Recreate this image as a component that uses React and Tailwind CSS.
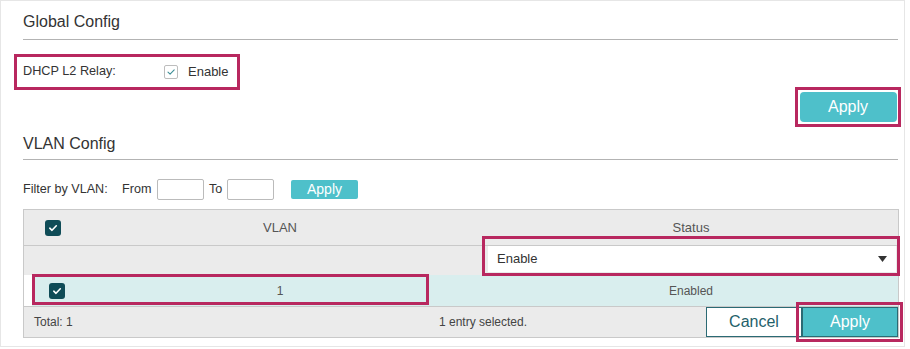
import React from "react";

const font = { fontFamily: '"Liberation Sans", Arial, sans-serif' };

function DarkCheck() {
  return (
    <span className="flex h-[16px] w-[16px] items-center justify-center rounded-[3px] bg-[#0f4c57]">
      <svg width="10" height="10" viewBox="0 0 10 10">
        <path d="M1.8 5.2 L4 7.3 L8.3 2.8" fill="none" stroke="#fff" strokeWidth="1.6" strokeLinecap="round" strokeLinejoin="round" />
      </svg>
    </span>
  );
}

export default function App() {
  return (
    <div className="h-[349px] w-[910px] bg-white text-[#333]" style={font}>
      <div className="h-[347px] w-[905px] border border-[#e6e6e6] bg-white pl-[22px] pr-[6px]">
        {/* Global Config */}
        <div className="flex h-[39px] items-center border-b border-[#b3b3b3] pt-[3px] text-[16px] text-[#333]">
          Global Config
        </div>
        <div className="mt-[14px] -ml-[9px] flex h-[36px] w-[226px] items-center border-[3px] border-[#b8285f] pl-[6px] text-[12.7px] text-[#333]">
          <span className="w-[141px]">DHCP L2 Relay:</span>
          <span className="flex h-[14px] w-[14px] items-center justify-center rounded-[2px] border border-[#bdbdbd] bg-white">
            <svg width="10" height="10" viewBox="0 0 10 10">
              <path d="M2 5.2 L4.1 7.2 L8.2 2.8" fill="none" stroke="#3f8f97" strokeWidth="1.1" strokeLinecap="round" strokeLinejoin="round" />
            </svg>
          </span>
          <span className="ml-[10px] text-[13px]">Enable</span>
        </div>
        <div className="-mt-[3px] -mr-[3px] flex justify-end">
          <div className="flex h-[40px] w-[106px] items-center justify-center border-[3px] border-[#b8285f] bg-white">
            <button className="flex h-[30px] w-[97px] items-center justify-center rounded-[4px] bg-[#4ec0ca] text-[16px] text-white">
              Apply
            </button>
          </div>
        </div>

        {/* VLAN Config */}
        <div className="flex h-[33px] items-center border-b border-[#b3b3b3] pt-[1px] text-[16px] text-[#333]">
          VLAN Config
        </div>
        <div className="mt-[19px] flex h-[21px] items-center text-[12.6px] text-[#333]">
          <span className="w-[99px] shrink-0">Filter by VLAN:</span>
          <span className="w-[35px] shrink-0">From</span>
          <span className="h-[21px] w-[47px] shrink-0 rounded-[2px] border border-[#bbb] bg-white" />
          <span className="w-[23px] shrink-0 pl-[5px]">To</span>
          <span className="h-[21px] w-[47px] shrink-0 rounded-[2px] border border-[#bbb] bg-white" />
          <button className="ml-[17px] flex h-[19px] w-[67px] items-center justify-center rounded-[2px] bg-[#4ec0ca] text-[14px] text-white">
            Apply
          </button>
        </div>

        {/* Table */}
        <div className="relative mt-[9px] w-[876px] border border-[#c9c9c9] text-[12px]">
          {/* header */}
          <div className="flex h-[36px] items-center border-b border-[#c9c9c9] bg-[#ebebeb] text-[13px] text-[#555]">
            <div className="flex w-[56px] justify-center pl-[2px]">
              <DarkCheck />
            </div>
            <div className="flex-1 pr-[4px] text-center">VLAN</div>
            <div className="w-[414px] text-center">Status</div>
          </div>
          {/* edit row */}
          <div className="flex h-[29px] bg-[#ebebeb]">
            <div className="flex-1" />
            <div className="mr-[2px] flex h-[26px] w-[408px] items-center justify-between bg-white pl-[9px] pr-[9px] text-[13px] text-[#333]">
              <span>Enable</span>
              <svg width="9" height="6" viewBox="0 0 9 6">
                <path d="M0 0 H9 L4.5 6 Z" fill="#333" />
              </svg>
            </div>
          </div>
          {/* data row */}
          <div className="flex h-[31px] items-center border-l-[8px] border-white bg-[#d9eeee] text-[12px] text-[#555]">
            <div className="flex w-[48px] justify-center pl-[2px]">
              <DarkCheck />
            </div>
            <div className="flex-1 pr-[4px] text-center">1</div>
            <div className="w-[414px] text-center">Enabled</div>
          </div>
          {/* footer */}
          <div className="flex h-[31px] items-center border-t border-[#c9c9c9] bg-[#ebebeb] text-[12px] text-[#444]">
            <span className="w-[220px] pl-[10px]">Total: 1</span>
            <span className="flex-1 pl-[16px] text-center">1 entry selected.</span>
            <button className="flex h-[30px] w-[96px] items-center justify-center border border-[#2b6a74] bg-white text-[16px] text-[#1f5f6a]">
              Cancel
            </button>
            <button className="flex h-[30px] w-[96px] items-center justify-center border border-[#2b6a74] bg-[#4ec0ca] text-[16px] text-white">
              Apply
            </button>
          </div>

          {/* annotation boxes */}
          <div className="pointer-events-none absolute left-[458px] top-[26px] h-[40px] w-[418px] border-[3px] border-[#b8285f]" />
          <div className="pointer-events-none absolute left-[8px] top-[64px] h-[31px] w-[397px] border-[3px] border-[#b8285f]" />
          <div className="pointer-events-none absolute left-[772px] top-[92px] h-[40px] w-[107px] border-[3px] border-[#b8285f]" />
        </div>
      </div>
    </div>
  );
}
